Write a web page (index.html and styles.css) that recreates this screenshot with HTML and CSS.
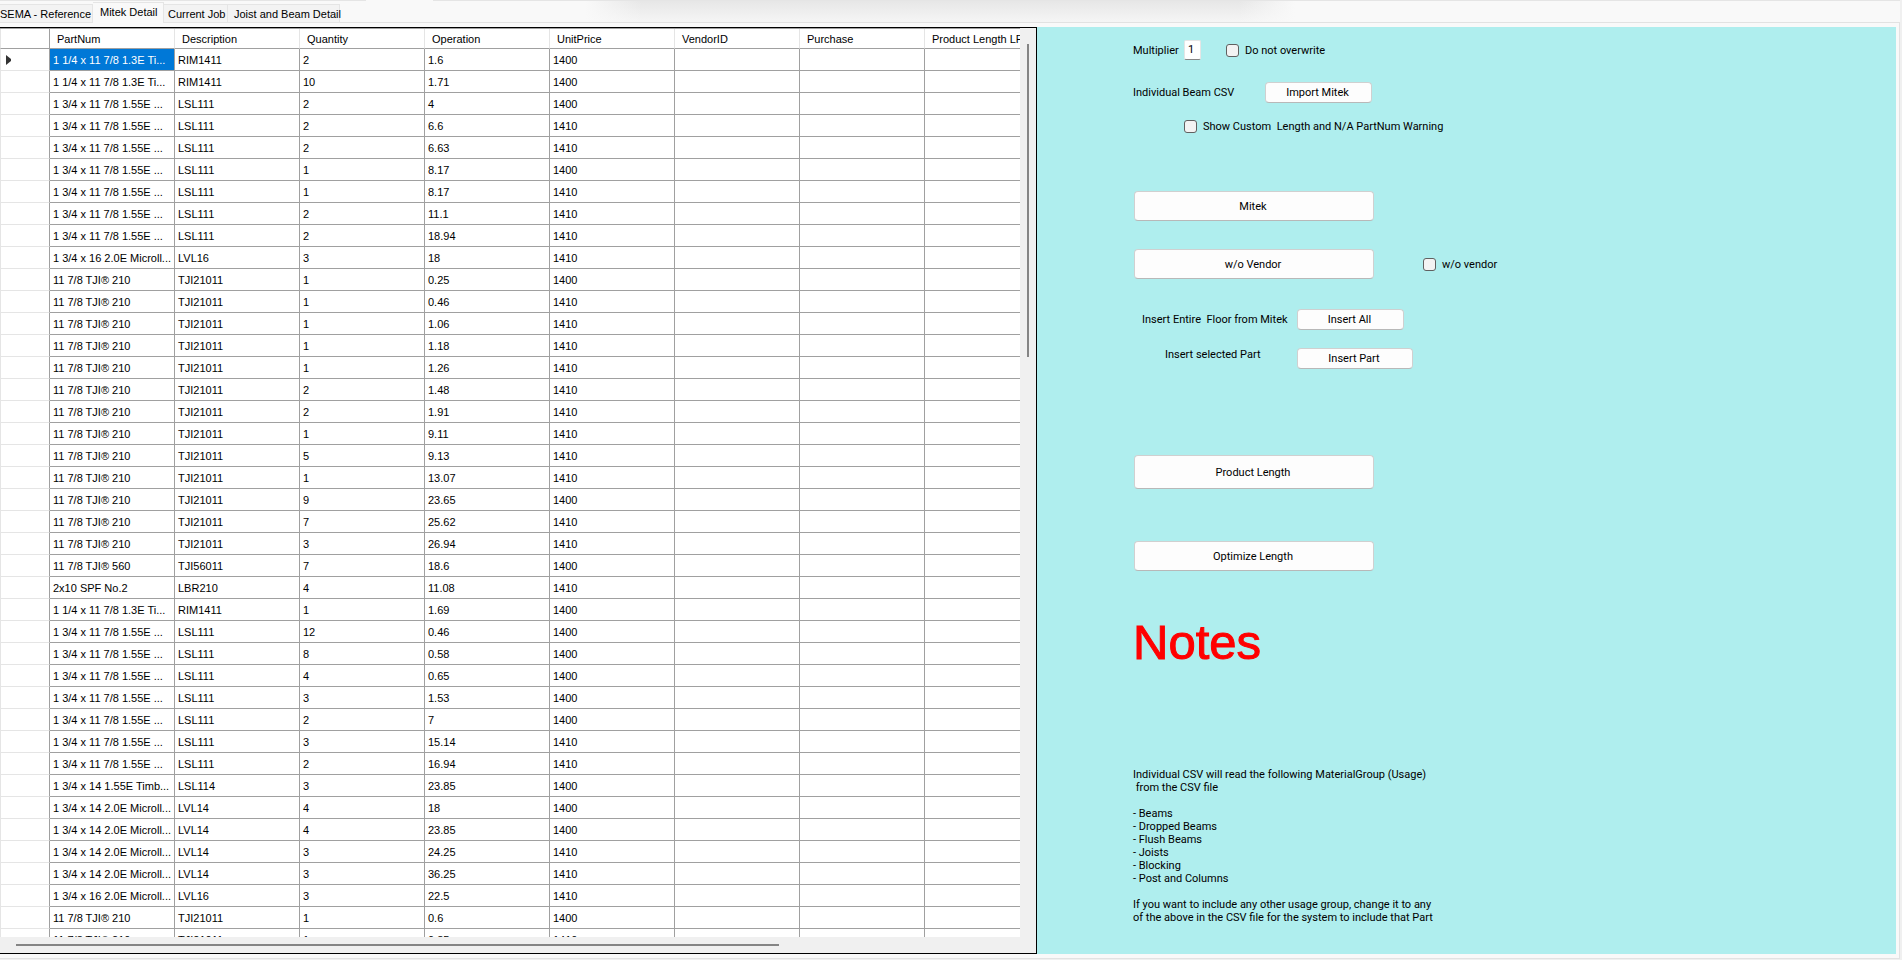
FILE: index.html
```html
<!DOCTYPE html>
<html lang="en">
<head>
<meta charset="utf-8">
<title>Mitek Detail</title>
<link rel="stylesheet" href="styles.css">
</head>
<body>
<div class="window">
<nav class="tabs">
<button class="tab first">SEMA - Reference</button><button class="tab active">Mitek Detail</button><button class="tab">Current Job</button><button class="tab">Joist and Beam Detail</button>
</nav>
<main class="page">
<section class="grid-pane">
<div class="grid-view">
<table class="parts">
<colgroup><col class="c-head"><col><col><col><col><col><col><col><col></colgroup>
<thead><tr><th></th><th>PartNum</th><th>Description</th><th>Quantity</th><th>Operation</th><th>UnitPrice</th><th>VendorID</th><th>Purchase</th><th>Product Length LF</th></tr></thead>
<tbody>
<tr><th><svg class="marker" width="6" height="10" viewBox="0 0 6 10"><path d="M0 0L5 4V6L0 10Z" fill="#333"/></svg></th><td class="selected">1 1/4 x 11 7/8 1.3E Ti...</td><td>RIM1411</td><td>2</td><td>1.6</td><td>1400</td><td></td><td></td><td></td></tr>
<tr><th></th><td>1 1/4 x 11 7/8 1.3E Ti...</td><td>RIM1411</td><td>10</td><td>1.71</td><td>1400</td><td></td><td></td><td></td></tr>
<tr><th></th><td>1 3/4 x 11 7/8 1.55E ...</td><td>LSL111</td><td>2</td><td>4</td><td>1400</td><td></td><td></td><td></td></tr>
<tr><th></th><td>1 3/4 x 11 7/8 1.55E ...</td><td>LSL111</td><td>2</td><td>6.6</td><td>1410</td><td></td><td></td><td></td></tr>
<tr><th></th><td>1 3/4 x 11 7/8 1.55E ...</td><td>LSL111</td><td>2</td><td>6.63</td><td>1410</td><td></td><td></td><td></td></tr>
<tr><th></th><td>1 3/4 x 11 7/8 1.55E ...</td><td>LSL111</td><td>1</td><td>8.17</td><td>1400</td><td></td><td></td><td></td></tr>
<tr><th></th><td>1 3/4 x 11 7/8 1.55E ...</td><td>LSL111</td><td>1</td><td>8.17</td><td>1410</td><td></td><td></td><td></td></tr>
<tr><th></th><td>1 3/4 x 11 7/8 1.55E ...</td><td>LSL111</td><td>2</td><td>11.1</td><td>1410</td><td></td><td></td><td></td></tr>
<tr><th></th><td>1 3/4 x 11 7/8 1.55E ...</td><td>LSL111</td><td>2</td><td>18.94</td><td>1410</td><td></td><td></td><td></td></tr>
<tr><th></th><td>1 3/4 x 16 2.0E Microll...</td><td>LVL16</td><td>3</td><td>18</td><td>1410</td><td></td><td></td><td></td></tr>
<tr><th></th><td>11 7/8 TJI® 210</td><td>TJI21011</td><td>1</td><td>0.25</td><td>1400</td><td></td><td></td><td></td></tr>
<tr><th></th><td>11 7/8 TJI® 210</td><td>TJI21011</td><td>1</td><td>0.46</td><td>1410</td><td></td><td></td><td></td></tr>
<tr><th></th><td>11 7/8 TJI® 210</td><td>TJI21011</td><td>1</td><td>1.06</td><td>1410</td><td></td><td></td><td></td></tr>
<tr><th></th><td>11 7/8 TJI® 210</td><td>TJI21011</td><td>1</td><td>1.18</td><td>1410</td><td></td><td></td><td></td></tr>
<tr><th></th><td>11 7/8 TJI® 210</td><td>TJI21011</td><td>1</td><td>1.26</td><td>1410</td><td></td><td></td><td></td></tr>
<tr><th></th><td>11 7/8 TJI® 210</td><td>TJI21011</td><td>2</td><td>1.48</td><td>1410</td><td></td><td></td><td></td></tr>
<tr><th></th><td>11 7/8 TJI® 210</td><td>TJI21011</td><td>2</td><td>1.91</td><td>1410</td><td></td><td></td><td></td></tr>
<tr><th></th><td>11 7/8 TJI® 210</td><td>TJI21011</td><td>1</td><td>9.11</td><td>1410</td><td></td><td></td><td></td></tr>
<tr><th></th><td>11 7/8 TJI® 210</td><td>TJI21011</td><td>5</td><td>9.13</td><td>1410</td><td></td><td></td><td></td></tr>
<tr><th></th><td>11 7/8 TJI® 210</td><td>TJI21011</td><td>1</td><td>13.07</td><td>1410</td><td></td><td></td><td></td></tr>
<tr><th></th><td>11 7/8 TJI® 210</td><td>TJI21011</td><td>9</td><td>23.65</td><td>1400</td><td></td><td></td><td></td></tr>
<tr><th></th><td>11 7/8 TJI® 210</td><td>TJI21011</td><td>7</td><td>25.62</td><td>1410</td><td></td><td></td><td></td></tr>
<tr><th></th><td>11 7/8 TJI® 210</td><td>TJI21011</td><td>3</td><td>26.94</td><td>1410</td><td></td><td></td><td></td></tr>
<tr><th></th><td>11 7/8 TJI® 560</td><td>TJI56011</td><td>7</td><td>18.6</td><td>1400</td><td></td><td></td><td></td></tr>
<tr><th></th><td>2x10 SPF No.2</td><td>LBR210</td><td>4</td><td>11.08</td><td>1410</td><td></td><td></td><td></td></tr>
<tr><th></th><td>1 1/4 x 11 7/8 1.3E Ti...</td><td>RIM1411</td><td>1</td><td>1.69</td><td>1400</td><td></td><td></td><td></td></tr>
<tr><th></th><td>1 3/4 x 11 7/8 1.55E ...</td><td>LSL111</td><td>12</td><td>0.46</td><td>1400</td><td></td><td></td><td></td></tr>
<tr><th></th><td>1 3/4 x 11 7/8 1.55E ...</td><td>LSL111</td><td>8</td><td>0.58</td><td>1400</td><td></td><td></td><td></td></tr>
<tr><th></th><td>1 3/4 x 11 7/8 1.55E ...</td><td>LSL111</td><td>4</td><td>0.65</td><td>1400</td><td></td><td></td><td></td></tr>
<tr><th></th><td>1 3/4 x 11 7/8 1.55E ...</td><td>LSL111</td><td>3</td><td>1.53</td><td>1400</td><td></td><td></td><td></td></tr>
<tr><th></th><td>1 3/4 x 11 7/8 1.55E ...</td><td>LSL111</td><td>2</td><td>7</td><td>1400</td><td></td><td></td><td></td></tr>
<tr><th></th><td>1 3/4 x 11 7/8 1.55E ...</td><td>LSL111</td><td>3</td><td>15.14</td><td>1410</td><td></td><td></td><td></td></tr>
<tr><th></th><td>1 3/4 x 11 7/8 1.55E ...</td><td>LSL111</td><td>2</td><td>16.94</td><td>1410</td><td></td><td></td><td></td></tr>
<tr><th></th><td>1 3/4 x 14 1.55E Timb...</td><td>LSL114</td><td>3</td><td>23.85</td><td>1400</td><td></td><td></td><td></td></tr>
<tr><th></th><td>1 3/4 x 14 2.0E Microll...</td><td>LVL14</td><td>4</td><td>18</td><td>1400</td><td></td><td></td><td></td></tr>
<tr><th></th><td>1 3/4 x 14 2.0E Microll...</td><td>LVL14</td><td>4</td><td>23.85</td><td>1400</td><td></td><td></td><td></td></tr>
<tr><th></th><td>1 3/4 x 14 2.0E Microll...</td><td>LVL14</td><td>3</td><td>24.25</td><td>1410</td><td></td><td></td><td></td></tr>
<tr><th></th><td>1 3/4 x 14 2.0E Microll...</td><td>LVL14</td><td>3</td><td>36.25</td><td>1410</td><td></td><td></td><td></td></tr>
<tr><th></th><td>1 3/4 x 16 2.0E Microll...</td><td>LVL16</td><td>3</td><td>22.5</td><td>1410</td><td></td><td></td><td></td></tr>
<tr><th></th><td>11 7/8 TJI® 210</td><td>TJI21011</td><td>1</td><td>0.6</td><td>1400</td><td></td><td></td><td></td></tr>
<tr><th></th><td>11 7/8 TJI® 210</td><td>TJI21011</td><td>1</td><td>0.85</td><td>1410</td><td></td><td></td><td></td></tr>
</tbody>
</table>
</div>
<div class="vscroll"><div class="vthumb"></div></div>
<div class="hscroll"><div class="hthumb"></div></div>
</section>
<section class="side">
<div class="row row-multiplier">
<label class="lbl-wide" for="mult">Multiplier</label><input class="num" id="mult" type="text" value="1">
<label class="check"><input type="checkbox">Do not overwrite</label>
</div>
<div class="row row-csv"><span class="lbl-csv">Individual Beam CSV</span><button class="btn">Import Mitek</button></div>
<label class="check row-warn"><input type="checkbox"><span>Show Custom&nbsp; Length and N/A PartNum Warning</span></label>
<button class="btn big row-mitek">Mitek</button>
<div class="row row-vendor"><button class="btn big">w/o Vendor</button><label class="check"><input type="checkbox">w/o vendor</label></div>
<div class="row row-all"><span class="lbl-insert">Insert Entire&nbsp; Floor from Mitek</span><button class="btn">Insert All</button></div>
<div class="row row-part"><span class="lbl-insert part">Insert selected Part</span><button class="btn wide">Insert Part</button></div>
<button class="btn big tall row-product">Product Length</button>
<button class="btn big row-optimize">Optimize Length</button>
<h1 class="notes-title">Notes</h1>
<div class="notes">Individual CSV will read the following MaterialGroup (Usage)
 from the CSV file

- Beams
- Dropped Beams
- Flush Beams
- Joists
- Blocking
- Post and Columns

If you want to include any other usage group, change it to any
of the above in the CSV file for the system to include that Part</div>
</section>
</main>
</div>
</body>
</html>
```

FILE: styles.css
```css
* { box-sizing: border-box; }
body {
  margin: 0;
  background: #f0f0f0;
  color: #000;
  font: 11px/13px "Liberation Sans", Arial, sans-serif;
}
button, input { font: inherit; color: inherit; }
.window {
  display: flex;
  flex-direction: column;
  height: 100vh;
  padding-right: 2px;
  overflow: hidden;
}
.tabs {
  display: flex;
  align-items: flex-end;
  flex: none;
  height: 23px;
  background:
    linear-gradient(#e5e5e5, #e5e5e5) 0 0 / 366px 1px no-repeat,
    linear-gradient(#e5e5e5, #e5e5e5) 433px 0 / 100% 1px no-repeat,
    linear-gradient(90deg, #f9f9f9, #f9f9f900 8%, #f9f9f900 92%, #f9f9f9) 585px 0 / 710px 23px no-repeat,
    linear-gradient(#e6e6e6, #f6f6f6) 585px 0 / 710px 23px no-repeat,
    #f9f9f9;
  box-shadow: inset 0 -1px #e2e2e2;
}
.tab {
  height: 19px;
  padding: 1px 3px 0 4px;
  border: 1px solid #e5e5e5;
  border-left: 0;
  background: #f3f3f3;
  text-align: left;
  white-space: nowrap;
}
.tab.first { width: 93px; padding-left: 0; }
.tab.active {
  width: 71px;
  height: 21px;
  padding: 0 0 1px 7px;
  border-bottom: 0;
  background: #f9f9f9;
}
.tab:nth-child(3) { width: 64px; }
.tab:nth-child(4) { width: 112px; padding-left: 6px; padding-right: 0; }
.page {
  display: grid;
  grid-template-columns: minmax(0, 1037fr) minmax(0, 859fr);
  flex: 1;
  min-height: 0;
  padding: 4px 3px 4px 0;
  border-right: 1px solid #e2e2e2;
  border-bottom: 1px solid #e2e2e2;
  margin-bottom: 1px;
  background: #f9f9f9;
}
.grid-pane {
  display: grid;
  grid-template-columns: minmax(0, 1fr) 16px;
  grid-template-rows: minmax(0, 1fr) 16px;
  min-height: 0;
  border: 1px solid #000;
  border-left: 0;
  background: #f0f0f0;
}
.grid-view {
  overflow: hidden;
  border-top: 1px solid #a0a0a0;
  background: #fff;
}
.parts {
  width: 1050px;
  table-layout: fixed;
  border-collapse: separate;
  border-spacing: 0;
}
.c-head { width: 50px; }
.parts th, .parts td {
  height: 22px;
  padding: 1px 0 0 3px;
  border-right: 1px solid #a0a0a0;
  border-bottom: 1px solid #a0a0a0;
  font-weight: normal;
  text-align: left;
  white-space: nowrap;
}
.parts thead th { height: 20px; padding-left: 7px; border-right-color: #e5e5e5; }
.parts th:first-child { border-left: 1px solid #e5e5e5; border-right-color: #a0a0a0; }
.parts tbody th { padding-left: 5px; border-bottom-color: #e5e5e5; }
.parts .selected { background: #0078d7; color: #fff; }
.marker { display: block; }
.vscroll { padding: 16px 7px 0; }
.vthumb { width: 2px; height: 35%; background: #858585; }
.hscroll { padding: 7px 0 0 16px; }
.hthumb { width: 76%; height: 2px; background: #858585; }
.side {
  display: flex;
  flex-direction: column;
  align-items: flex-start;
  padding: 13px 0 0 96px;
  overflow: hidden;
  background: #afeeee;
  font-family: Roboto, "Liberation Sans", sans-serif;
}
.row { display: flex; align-items: center; }
.lbl-wide { width: 51px; }
.num {
  width: 17px;
  height: 20px;
  padding: 0 0 2px 3px;
  border: 1px solid #e5e5e5;
  border-bottom-color: #858585;
  border-radius: 2px;
  background: #fff;
}
.check { display: flex; align-items: center; gap: 6px; white-space: nowrap; }
.check input {
  appearance: none;
  width: 13px;
  height: 13px;
  margin: 0;
  border: 1px solid #606060;
  border-radius: 3px;
  background: #f3f3f3;
}
.row-multiplier .check { margin-left: 25px; }
.btn {
  width: 107px;
  height: 21px;
  padding: 0 2px 0 0;
  border: 1px solid #d0d0d0;
  border-bottom-color: #b8b8b8;
  border-radius: 4px;
  background: #fdfdfd;
}
.btn.wide { width: 116px; }
.btn.big { width: 240px; height: 30px; margin-left: 1px; }
.btn.big.tall { height: 34px; }
.row-csv { margin-top: 22px; }
.lbl-csv { width: 132px; }
.row-warn { margin: 17px 0 0 51px; }
.row-mitek { margin-top: 58px; }
.row-vendor { gap: 49px; margin-top: 28px; }
.row-all { margin-top: 30px; }
.lbl-insert { width: 164px; padding-left: 9px; white-space: nowrap; }
.lbl-insert.part { padding-left: 32px; }
.row-part { align-items: flex-start; margin-top: 18px; }
.row-product { margin-top: 86px; }
.row-optimize { margin-top: 52px; }
.notes-title {
  margin: 43px 0 0;
  color: #f00;
  font-family: "Liberation Sans", Arial, sans-serif;
  font-size: 49px;
  font-weight: normal;
  line-height: 56px;
  -webkit-text-stroke: 1px #f00;
}
.notes { margin-top: 98px; white-space: pre; }
```
